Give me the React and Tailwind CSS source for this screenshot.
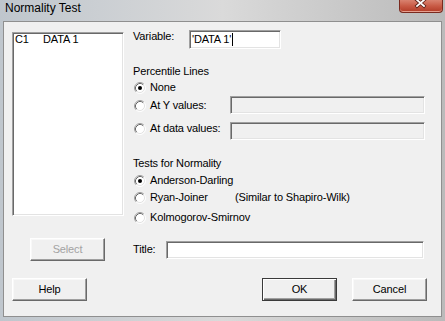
import React from "react";

const sunken =
  "border border-t-[#a0a0a0] border-l-[#a0a0a0] border-b-white border-r-white shadow-[inset_1px_1px_0_#696969,inset_-1px_-1px_0_#e3e3e3]";
const raised =
  "border border-t-white border-l-white border-b-[#696969] border-r-[#696969] shadow-[inset_-1px_-1px_0_#a0a0a0,inset_1px_1px_0_#f8f8f8] bg-[#f0f0f0]";
const defRaised =
  "border border-[#3a3a3a] shadow-[inset_1px_1px_0_#ffffff,inset_-1px_-1px_0_#696969,inset_-2px_-2px_0_#a0a0a0] bg-[#f0f0f0]";

function Radio({ checked }) {
  return (
    <span className="w-[17px] h-[13px] flex items-center pl-[1px] shrink-0">
      <svg width="12" height="12" viewBox="0 0 12 12">
        <circle cx="6" cy="6" r="5" fill="#ffffff" />
        <path d="M2.11 9.89 A5.5 5.5 0 0 1 9.89 2.11" stroke="#a0a0a0" strokeWidth="1" fill="none" />
        <path d="M9.89 2.11 A5.5 5.5 0 0 1 2.11 9.89" stroke="#ffffff" strokeWidth="1" fill="none" />
        <path d="M2.82 9.18 A4.5 4.5 0 0 1 9.18 2.82" stroke="#696969" strokeWidth="1" fill="none" />
        <path d="M9.18 2.82 A4.5 4.5 0 0 1 2.82 9.18" stroke="#e3e3e3" strokeWidth="1" fill="none" />
        {checked && <circle cx="6" cy="6" r="2" fill="#000000" />}
      </svg>
    </span>
  );
}

function RadioRow({ checked, children, className = "" }) {
  return (
    <div className={`flex items-center h-[13px] ${className}`}>
      <Radio checked={checked} />
      {children}
    </div>
  );
}

function CloseBtn() {
  return (
    <div className="w-[44px] h-[13px] rounded-b-[4px] border border-t-0 border-[#7a2a1f] bg-gradient-to-b from-[#d9826f] via-[#c85a45] to-[#b23a26] shadow-[inset_0_-1px_0_#e6a090] flex justify-center">
      <svg width="14" height="10" viewBox="0 0 14 10">
        <path d="M3 0 L10 6 M10 0 L3 6" stroke="#5a2016" strokeWidth="3.4" strokeLinecap="square" />
        <path d="M3 0 L10 6 M10 0 L3 6" stroke="#ffffff" strokeWidth="1.8" strokeLinecap="square" />
      </svg>
    </div>
  );
}

export default function App() {
  return (
    <div className="w-[445px] h-[321px] overflow-hidden bg-gradient-to-r from-[#bfc6cd] via-[#dadada] to-[#bababa] font-['Liberation_Sans',Arial,sans-serif] text-black">
      <div className="h-[21px] flex justify-between items-start pl-[5px] pr-[2px]">
        <span className="text-[12px] leading-[14px] mt-[1px]">Normality Test</span>
        <CloseBtn />
      </div>
      <div className="ml-[3px] w-[439px] h-[296px] border border-[#8f8f8f] bg-[#f0f0f0] pl-[8px] pt-[8px] text-[11px] leading-[13px] tracking-[-0.15px]">
        <div className="flex h-[208px]">
          <div className={`mt-[2px] w-[112px] h-[184px] bg-white ${sunken} pl-[2px]`}>
            <div className="flex">
              <span className="w-[28px]">C1</span>
              <span>DATA 1</span>
            </div>
          </div>
          <div className="ml-[9px] flex flex-col w-[294px]">
            <div className="flex items-start h-[19px]">
              <span className="w-[56px]">Variable:</span>
              <div className={`w-[92px] h-[19px] bg-white ${sunken} pl-[2px] flex items-center`}>
                <span>'DATA 1'</span>
                <span className="w-px h-[13px] bg-black ml-px" />
              </div>
            </div>
            <div className="mt-[16px] h-[13px]">Percentile Lines</div>
            <RadioRow checked className="mt-[3px]">
              <span>None</span>
            </RadioRow>
            <div className="mt-[2px] flex items-start h-[18px]">
              <RadioRow className="mt-[3px]">
                <span className="w-[80px]">At Y values:</span>
              </RadioRow>
              <div className={`w-[195px] h-[18px] ${sunken} bg-[#f0f0f0]`} />
            </div>
            <div className="mt-[8px] flex items-start h-[18px]">
              <RadioRow>
                <span className="w-[80px]">At data values:</span>
              </RadioRow>
              <div className={`w-[195px] h-[18px] ${sunken} bg-[#f0f0f0]`} />
            </div>
            <div className="mt-[17px] h-[13px]">Tests for Normality</div>
            <RadioRow checked className="mt-[4px]">
              <span>Anderson-Darling</span>
            </RadioRow>
            <RadioRow className="mt-[4px]">
              <span className="w-[85px]">Ryan-Joiner</span>
              <span>(Similar to Shapiro-Wilk)</span>
            </RadioRow>
            <RadioRow className="mt-[7px]">
              <span>Kolmogorov-Smirnov</span>
            </RadioRow>
          </div>
        </div>
        <div className="flex items-center h-[23px]">
          <div className={`ml-[18px] w-[75px] h-[23px] ${raised} flex items-center justify-center text-[#a3a3a3]`}>
            Select
          </div>
          <span className="ml-[28px] w-[33px]">Title:</span>
          <div className={`w-[258px] h-[18px] bg-white ${sunken}`} />
        </div>
        <div className="mt-[17px] flex h-[23px]">
          <div className={`w-[75px] h-[23px] ${raised} flex items-center justify-center`}>Help</div>
          <div className={`ml-[175px] w-[75px] h-[23px] ${defRaised} flex items-center justify-center`}>OK</div>
          <div className={`ml-[15px] w-[75px] h-[23px] ${raised} flex items-center justify-center`}>Cancel</div>
        </div>
      </div>
    </div>
  );
}
